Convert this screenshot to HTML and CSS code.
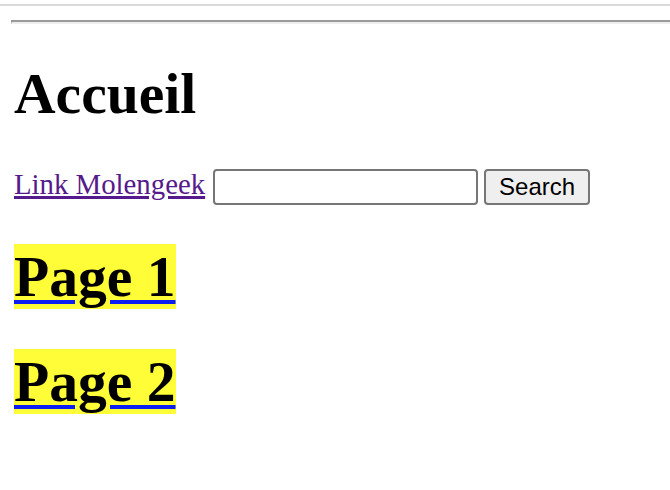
FILE: index.html
```html
<!DOCTYPE html>
<html lang="fr">
<head>
<meta charset="utf-8">
<title>Accueil</title>
<link rel="stylesheet" href="styles.css">
</head>
<body>
<div class="topline"></div>
<hr class="rule">
<main class="content">
  <h1 class="title">Accueil</h1>
  <form class="search-row" onsubmit="return false">
    <a class="ext-link" href="#">Link Molengeek</a>
    <input class="search-input" type="text" aria-label="Search">
    <button class="search-btn" type="submit">Search</button>
  </form>
  <h1 class="page-link"><a href="#"><mark class="hl">Page 1</mark></a></h1>
  <h1 class="page-link"><a href="#"><mark class="hl">Page 2</mark></a></h1>
</main>
</body>
</html>
```
FILE: styles.css
```css
html, body {
  margin: 0;
  padding: 0;
  background: #ffffff;
  overflow: hidden;
}

body {
  font-family: "Liberation Serif", "Times New Roman", serif;
  color: #000;
}

.topline {
  margin-top: 4px;
  height: 2px;
  background: #dadadc;
}

.rule {
  margin: 14px 0 0 11px;
  height: 0;
  border-top: 2px solid #9a9a9a;
  border-left: 1px solid #9a9a9a;
  border-bottom: 2px solid #eeeeee;
  border-right: 0;
}

.content {
  padding: 0 14px;
}

.title {
  margin: 37px 0 0;
  font-size: 57.6px;
  line-height: 66px;
  font-weight: bold;
}

.search-row {
  display: flex;
  align-items: flex-start;
  margin: 40px 0 0;
}

.ext-link {
  margin-top: 1px;
  font-size: 28.8px;
  line-height: 33px;
  color: #551a8b;
  text-decoration-thickness: 2.5px;
  text-underline-offset: 2px;
}

.search-input {
  margin: 2px 0 0 8px;
  width: 265px;
  height: 36px;
  box-sizing: border-box;
  border: 2px solid #767676;
  border-radius: 4px;
  padding: 0 4px;
  font-family: "Liberation Sans", Arial, sans-serif;
  font-size: 24px;
  background: #fff;
}

.search-btn {
  margin: 2px 0 0 6px;
  width: 106px;
  height: 36px;
  box-sizing: border-box;
  border: 2px solid #767676;
  border-radius: 4px;
  background: #efefef;
  color: #000;
  padding: 0;
  font-family: "Liberation Sans", Arial, sans-serif;
  font-size: 24px;
  line-height: 30px;
}

.page-link {
  margin: 39px 0 0;
  font-size: 57.6px;
  line-height: 66px;
  font-weight: bold;
}

.page-link a {
  color: #0b1ff2;
  text-decoration-thickness: 3.5px;
  text-underline-offset: 4px;
}

.hl {
  background: #fffd38;
  color: #000;
  padding: 1px 0;
}
```
